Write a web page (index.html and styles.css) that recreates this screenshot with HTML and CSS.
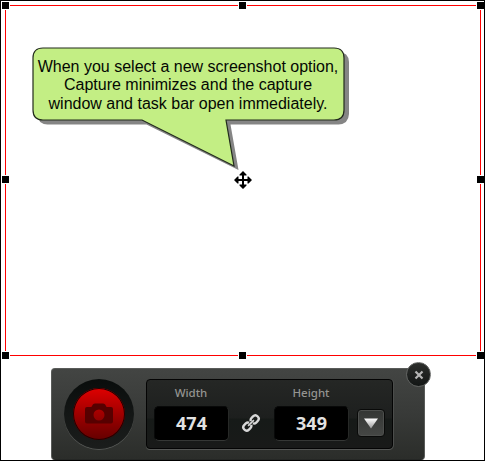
FILE: index.html
```html
<!DOCTYPE html>
<html lang="en">
<head>
<meta charset="utf-8">
<title>Capture</title>
<link rel="stylesheet" href="styles.css">
</head>
<body>
<main class="screen">
  <section class="capture">
    <i class="handle nw"></i><i class="handle n"></i><i class="handle ne"></i>
    <i class="handle w"></i><i class="handle e"></i>
    <i class="handle sw"></i><i class="handle s"></i><i class="handle se"></i>
    <div class="callout">
      <svg class="callout-shape" width="320" height="126" viewBox="32 47 320 126">
        <path transform="translate(4.5 4)" fill="#858585" d="M43 48H334Q344 48 344.500 58V110Q344 120 334 120.500H226L234 166L142 120.500H43Q33 120 33 110V58Q33 48 43 48Z"/>
        <path fill="#c3ee84" stroke="#222b1c" stroke-width="1.200" d="M43 48H334Q344 48 344 58V110Q344 120 334 120H226L234 166L142 120H43Q33 120 33 110V58Q33 48 43 48Z"/>
      </svg>
      <p class="callout-text"><span class="l1">When you select a new screenshot option,</span><span class="l2">Capture minimizes and the capture</span><span class="l3">window and task bar open immediately.</span></p>
    </div>
    <svg class="move" width="18" height="18" viewBox="0 0 18 18">
      <path d="M9 0L12.500 3.500V4.500H10V8H13.500V5.500H14.500L18 9L14.500 12.500H13.500V10H10V13.500H12.500V14.500L9 18L5.500 14.500V13.500H8V10H4.500V12.500H3.500L0 9L3.500 5.500H4.500V8H8V4.500H5.500V3.500Z"/>
    </svg>
  </section>
  <section class="toolbar">
    <button class="close" aria-label="Close"><svg width="10" height="10" viewBox="0 0 10 10"><path d="M1.500 1.500L8.500 8.500M8.500 1.500L1.500 8.500"/></svg></button>
    <div class="ring"><button class="record" aria-label="Take screenshot">
      <svg width="28" height="22" viewBox="0 0 28 22"><path fill="#570000" fill-rule="evenodd" d="M2 4H6Q7 4 7.500 2Q8 .5 10 .5H18Q20 .5 20.500 2Q21 4 22 4H26Q28 4 28 6V18.500Q28 20.500 26 20.500H2Q0 20.500 0 18.500V6Q0 4 2 4ZM14 6.500A5.500 5.500 0 1 0 14 17.500A5.500 5.500 0 1 0 14 6.500Z"/></svg>
    </button></div>
    <div class="dims">
      <div class="field"><label>Width</label><output>474</output></div>
      <svg class="link" width="20" height="20" viewBox="0 0 20 20"><g transform="translate(10 10) rotate(-44)" fill="none" stroke="#d8d8d8" stroke-width="2.400"><path d="M-1.200 -1.500Q-2 -3.300 -4 -3.300H-6Q-9.300 -3.300 -9.300 0T-6 3.300H-4Q-2 3.300 -1.200 1.500"/><path d="M1.200 1.500Q2 3.300 4 3.300H6Q9.300 3.300 9.300 0T6 -3.300H4Q2 -3.300 1.200 -1.500"/><path d="M-4 0H4" stroke-width="1.700"/></g></svg>
      <div class="field"><label>Height</label><output>349</output></div>
      <button class="drop" aria-label="Presets"><svg width="14" height="11" viewBox="0 0 14 11"><defs><linearGradient id="arrow" x2="0" y2="1"><stop stop-color="#fff"/><stop offset="1" stop-color="#999"/></linearGradient></defs><path fill="url(#arrow)" d="M0 .5H14L7 10.500Z"/></svg></button>
    </div>
  </section>
</main>
</body>
</html>
```
FILE: styles.css
```css
* { box-sizing: border-box; }
body { margin: 0; background: #fff; font-family: "Liberation Sans", Arial, sans-serif; }
button { padding: 0; border: 0; }
svg { display: block; }
.screen { position: relative; width: 485px; height: 461px; border: 1px solid #000; padding: 4px 3px 0 4px; overflow: hidden; }
.capture { position: relative; width: 476px; height: 351px; border: 1px solid #f00; }
.handle { position: absolute; width: 7px; height: 7px; background: #000; box-shadow: 0 0 0 1px #fff; }
.nw, .n, .ne { top: -4px; }
.w, .e { top: 170px; }
.sw, .s, .se { top: 346px; }
.nw, .w, .sw { left: -4px; }
.n, .s { left: 233px; }
.ne, .e, .se { left: 471px; box-shadow: -1px 0 #fff, 0 -1px #fff, 0 1px #fff; }
.callout { position: absolute; left: 26px; top: 41px; width: 320px; height: 126px; }
.callout-shape { position: absolute; left: 0; top: 0; }
.callout-text { position: relative; width: 312px; margin: 0; padding-top: 10px; font-size: 16px; line-height: 19px; color: #050803; text-align: center; }
.callout-text span { display: block; white-space: nowrap; }
.callout-text .l2 { line-height: 18px; }
.move { position: absolute; left: 228px; top: 165px; }

.toolbar { position: relative; display: flex; width: 374px; height: 92px; margin: 12px 0 0 46px; padding: 10px 0 0 12px; border: 1px solid #595b59; border-bottom-color: #252725; border-radius: 4px; background: linear-gradient(#434543, #383a38 50%, #2b2d2a); }
.close { position: absolute; left: 354px; top: -7px; display: grid; place-items: center; width: 25px; height: 25px; border: 1px solid #626462; border-radius: 50%; background: linear-gradient(#2c2e2c, #131615); }
.close path { stroke: #b5b5b5; stroke-width: 2.2; }
.ring { display: grid; place-items: center; width: 70px; height: 70px; border-radius: 50%; background: linear-gradient(#090d0c, #131615 50%, #1b1d1c); box-shadow: 0 1px 0 #555755; }
.record { display: grid; place-items: center; width: 52px; height: 52px; border-radius: 50%; background: linear-gradient(#df0000, #a00000 50%, #650000); box-shadow: inset 0 0 0 1px #200; }
.dims { display: flex; width: 247px; height: 70px; margin-left: 12px; padding: 6px 0 0 7px; border: 1px solid #040404; border-radius: 4px; background: linear-gradient(#252725, #1d1f1e 55%, #161a18 58%, #191a19); box-shadow: 0 1px 0 #555755, 1px 0 0 #4b4d4b; }
.field { width: 75px; text-align: center; font-family: "Noto Sans", "Open Sans", sans-serif; }
.field label { display: block; height: 20px; padding-right: 1px; font-size: 11.5px; line-height: 14px; font-weight: 500; color: #949491; }
.field output { display: block; height: 35px; border: 1px solid #080909; border-bottom-color: #353735; border-right-color: #272927; border-radius: 5px; background: #000; font: bold 18px/33px "Noto Sans", sans-serif; color: #e2e2e2; }
.link { margin: 27px 13px 0 12px; }
.drop { display: grid; place-items: center; width: 28px; height: 28px; margin: 23px 0 0 8px; border: 1px solid #090a09; border-radius: 4px; background: linear-gradient(#343634, #454745); box-shadow: inset 0 0 0 1px #4d4f4d; }
```
